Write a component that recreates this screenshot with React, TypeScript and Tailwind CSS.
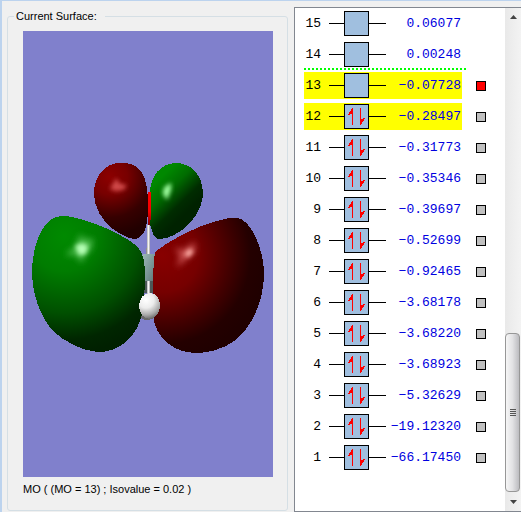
import { useState } from "react";

type Orbital = { n: number; energy: string; occupied: boolean };

const orbitals: Orbital[] = [
  { n: 15, energy: "0.06077", occupied: false },
  { n: 14, energy: "0.00248", occupied: false },
  { n: 13, energy: "−0.07728", occupied: false },
  { n: 12, energy: "−0.28497", occupied: true },
  { n: 11, energy: "−0.31773", occupied: true },
  { n: 10, energy: "−0.35346", occupied: true },
  { n: 9, energy: "−0.39697", occupied: true },
  { n: 8, energy: "−0.52699", occupied: true },
  { n: 7, energy: "−0.92465", occupied: true },
  { n: 6, energy: "−3.68178", occupied: true },
  { n: 5, energy: "−3.68220", occupied: true },
  { n: 4, energy: "−3.68923", occupied: true },
  { n: 3, energy: "−5.32629", occupied: true },
  { n: 2, energy: "−19.12320", occupied: true },
  { n: 1, energy: "−66.17450", occupied: true },
];

const highlighted = [12, 13];

function Surface() {
  return (
    <svg
      viewBox="23 31 250 446"
      className="block w-full bg-[#8080cc]"
      role="img"
      aria-label="Molecular orbital surface"
      shapeRendering="crispEdges"
    >
      <defs>
        <radialGradient id="greenLarge" gradientUnits="userSpaceOnUse" cx="64" cy="236" r="118">
          <stop offset="0" stopColor="#008a00" />
          <stop offset="0.3" stopColor="#007c00" />
          <stop offset="0.65" stopColor="#005000" />
          <stop offset="0.88" stopColor="#002600" />
          <stop offset="1" stopColor="#002000" />
        </radialGradient>
        <radialGradient id="redLarge" gradientUnits="userSpaceOnUse" cx="162" cy="256" r="104">
          <stop offset="0" stopColor="#880000" />
          <stop offset="0.35" stopColor="#760000" />
          <stop offset="0.65" stopColor="#440000" />
          <stop offset="0.85" stopColor="#240000" />
          <stop offset="1" stopColor="#200000" />
        </radialGradient>
        <radialGradient id="redSmall" gradientUnits="userSpaceOnUse" cx="110" cy="177" r="58">
          <stop offset="0" stopColor="#8c0000" />
          <stop offset="0.3" stopColor="#780000" />
          <stop offset="0.7" stopColor="#360000" />
          <stop offset="1" stopColor="#220000" />
        </radialGradient>
        <linearGradient id="greenSmall" gradientUnits="userSpaceOnUse" x1="158" y1="180" x2="188" y2="211">
          <stop offset="0" stopColor="#008800" />
          <stop offset="0.35" stopColor="#006c00" />
          <stop offset="0.75" stopColor="#002c00" />
          <stop offset="1" stopColor="#002200" />
        </linearGradient>
        <radialGradient id="hydrogen" gradientUnits="userSpaceOnUse" cx="146" cy="300" r="20">
          <stop offset="0" stopColor="#ffffff" />
          <stop offset="0.4" stopColor="#ececec" />
          <stop offset="0.75" stopColor="#a8a8a8" />
          <stop offset="1" stopColor="#606060" />
        </radialGradient>
        <linearGradient id="carbon" x1="0" y1="0" x2="1" y2="1">
          <stop offset="0" stopColor="#a0bcbc" />
          <stop offset="0.5" stopColor="#789494" />
          <stop offset="1" stopColor="#506464" />
        </linearGradient>
        <linearGradient id="bond" x1="0" y1="0" x2="1" y2="0">
          <stop offset="0" stopColor="#b0b0b0" />
          <stop offset="0.5" stopColor="#f4f4f4" />
          <stop offset="1" stopColor="#a0a0a0" />
        </linearGradient>
        <linearGradient id="oxygen" x1="0" y1="0" x2="0" y2="1">
          <stop offset="0" stopColor="#ff0000" />
          <stop offset="0.6" stopColor="#f40000" />
          <stop offset="1" stopColor="#800000" />
        </linearGradient>
        <filter id="soft" x="-50%" y="-50%" width="200%" height="200%">
          <feGaussianBlur stdDeviation="2" />
        </filter>
        <filter id="softer" x="-50%" y="-50%" width="200%" height="200%">
          <feGaussianBlur stdDeviation="3" />
        </filter>
      </defs>

      <rect x="147" y="225" width="3" height="30" fill="url(#bond)" />
      <path d="M146 248h1v7h-1z" fill="#909090" />
      <path d="M141 255Q149 252 157 255L155 276Q153 289 146 290L142 276Z" fill="url(#carbon)" />
      <path d="M144 281h9v12h-9z" fill="#4c5858" />
      <path d="M139 308Q138 319 146 320Q154 320 157 314L153 306Z" fill="#686868" />

      <path
        d="M122 163C105 162 94 176 94 194C94 207 102 221 113 229C122 235 129 239 135 239C144 238 148 226 148 207C148 190 146 178 141 171C136 165 130 163 122 163Z"
        fill="url(#redSmall)"
      />
      <path d="M110 189L116 178L120 184L127 185L124 190L115 191Z" fill="#d04848" filter="url(#soft)" />

      <path
        d="M175 163C160 164 151 176 150 191L149 216C150 227 153 237 157 239C166 240 180 234 191 222C199 212 203 202 203 193C202 174 191 163 175 163Z"
        fill="url(#greenSmall)"
      />
      <path d="M163 194L164 187L171 183L171 190L167 200Z" fill="#a0ffa0" filter="url(#soft)" />
      <path d="M148 192h3v24l-1 9h-2z" fill="url(#oxygen)" />

      <path
        d="M62 216C72 215 96 224 108 229C122 236 134 242 139 249C144 256 145 264 145 277L144 304C141 324 135 334 126 342C116 350 107 352 98 352C82 351 65 342 53 331C40 317 32 293 32 271C33 242 43 217 62 216Z"
        fill="url(#greenLarge)"
      />
      <path d="M65 255L75 247L80 235L85 239L93 239L92 248L87 253L81 263L76 255Z" fill="#48b848" filter="url(#softer)" />
      <path d="M75 246L82 243L88 246L86 254L79 255Z" fill="#b4ffb4" filter="url(#soft)" />

      <path
        d="M156 251C168 242 186 232 204 225C216 221 229 217 237 218C251 219 264 250 264 273C264 299 254 324 236 340C222 350 207 353 195 353C176 352 161 342 155 325C152 316 153 292 153 279C154 266 153 256 156 251Z"
        fill="url(#redLarge)"
      />
      <path d="M175 248L183 250L195 242L195 251L188 258L177 267L180 256Z" fill="#c85050" filter="url(#softer)" />
      <path d="M184 254L190 248L193 252L188 257Z" fill="#ffb0a8" filter="url(#soft)" />

      <rect x="147" y="281" width="3" height="15" fill="url(#bond)" />
      <path
        d="M150 293C143 293 139 299 139 306C139 314 144 319 150 319C157 318 160 312 160 304C159 297 155 293 150 293Z"
        fill="url(#hydrogen)"
      />
    </svg>
  );
}

function OrbitalBox({ occupied }: { occupied: boolean }) {
  return (
    <span className="flex items-center">
      <span className="h-px w-[15px] bg-black" />
      <span className="block size-[25px] border border-black bg-[#a0bfdf]">
        {occupied && (
          <svg viewBox="0 0 23 23" className="block size-full" shapeRendering="crispEdges" aria-hidden="true">
            <path
              d="M7 3h1v17h-1zM6 4h1v5h-1zM5 6h1v3h-1zM4 7h1v3h-1zM3 9h1v1h-1z"
              fill="#f00"
            />
            <path
              d="M15 3h1v17h-1zM16 14h1v5h-1zM17 14h1v3h-1zM18 13h1v3h-1zM19 13h1v1h-1z"
              fill="#f00"
            />
          </svg>
        )}
      </span>
      <span className="h-px w-[17px] bg-black" />
    </span>
  );
}

function ScrollBar() {
  return (
    <div className="flex w-4 shrink-0 flex-col bg-gradient-to-r from-[#e9e9e9] to-[#f3f3f3]">
      <button type="button" aria-label="Scroll up" className="flex h-[17px] items-center justify-center">
        <svg width="7" height="4" viewBox="0 0 7 4" aria-hidden="true">
          <path d="M0 4L3.500 0L7 4Z" fill="#444" />
        </svg>
      </button>
      <div className="flex-1" />
      <div className="mr-px flex h-[159px] flex-col items-center justify-center gap-px rounded-sm border border-[#979797] bg-gradient-to-r from-[#f6f6f6] via-[#e2e2e4] to-[#bcbcc0]">
        <span className="h-px w-1.5 bg-[#555]" />
        <span className="h-px w-1.5 bg-[#555]" />
        <span className="h-px w-1.5 bg-[#555]" />
        <span className="h-px w-1.5 bg-[#555]" />
      </div>
      <button type="button" aria-label="Scroll down" className="flex h-[19px] items-center justify-center">
        <svg width="7" height="4" viewBox="0 0 7 4" aria-hidden="true">
          <path d="M0 0L3.500 4L7 0Z" fill="#444" />
        </svg>
      </button>
    </div>
  );
}

export default function App() {
  const [shown, setShown] = useState<number[]>([13]);
  const toggle = (n: number) =>
    setShown((s) => (s.includes(n) ? s.filter((v) => v !== n) : [...s, n]));

  return (
    <main className="flex min-h-screen border-t border-l-2 border-[#bcd3ee] bg-[#f0f0f0] font-['Liberation_Sans',Arial,sans-serif] text-[11px] leading-4 text-black">
      <fieldset className="mt-[7px] mb-px ml-[5px] min-w-0 flex-1 rounded-[3px] border border-[#d5dfe5] pr-3.5 pl-[15px]">
        <legend className="-ml-[9px] px-0.5 pr-2">Current Surface:</legend>
        <div className="pt-[7px]">
          <Surface />
          <p className="mt-1">MO ( (MO = 13) ; Isovalue = 0.02 )</p>
        </div>
      </fieldset>

      <section
        aria-label="Orbital energies"
        className="mt-1.5 ml-1.5 flex w-[227px] shrink-0 border border-r-0 border-[#828790] bg-white"
      >
        <ul className="flex-1 pt-0.5 pl-[9px] font-['Liberation_Mono','Courier_New',monospace] text-[13px] leading-[27px]">
          {orbitals.map(({ n, energy, occupied }) => (
            <li key={n} className="h-[31px]">
              <div className="flex items-center">
                <div
                  className={
                    highlighted.includes(n)
                      ? "flex h-[27px] w-[158px] items-center bg-[#ffff00]"
                      : "flex h-[27px] w-[158px] items-center"
                  }
                >
                  <span className="mr-2 w-[17px] text-right">{n}</span>
                  <OrbitalBox occupied={occupied} />
                  <span className="flex-1 pr-px text-right text-[#0000e0]">{energy}</span>
                </div>
                {n <= 13 && (
                  <input
                    type="checkbox"
                    aria-label={`Show orbital ${n}`}
                    checked={shown.includes(n)}
                    onChange={() => toggle(n)}
                    className="ml-3.5 size-2.5 appearance-none border border-black bg-[#c0c0c0] checked:bg-[#ff0000]"
                  />
                )}
              </div>
              {n === 14 && (
                <div className="h-0.5 w-[162px] bg-[repeating-linear-gradient(90deg,#00ff00_0px,#00ff00_2px,transparent_2px,transparent_4px)]" />
              )}
            </li>
          ))}
        </ul>
        <ScrollBar />
      </section>
    </main>
  );
}
